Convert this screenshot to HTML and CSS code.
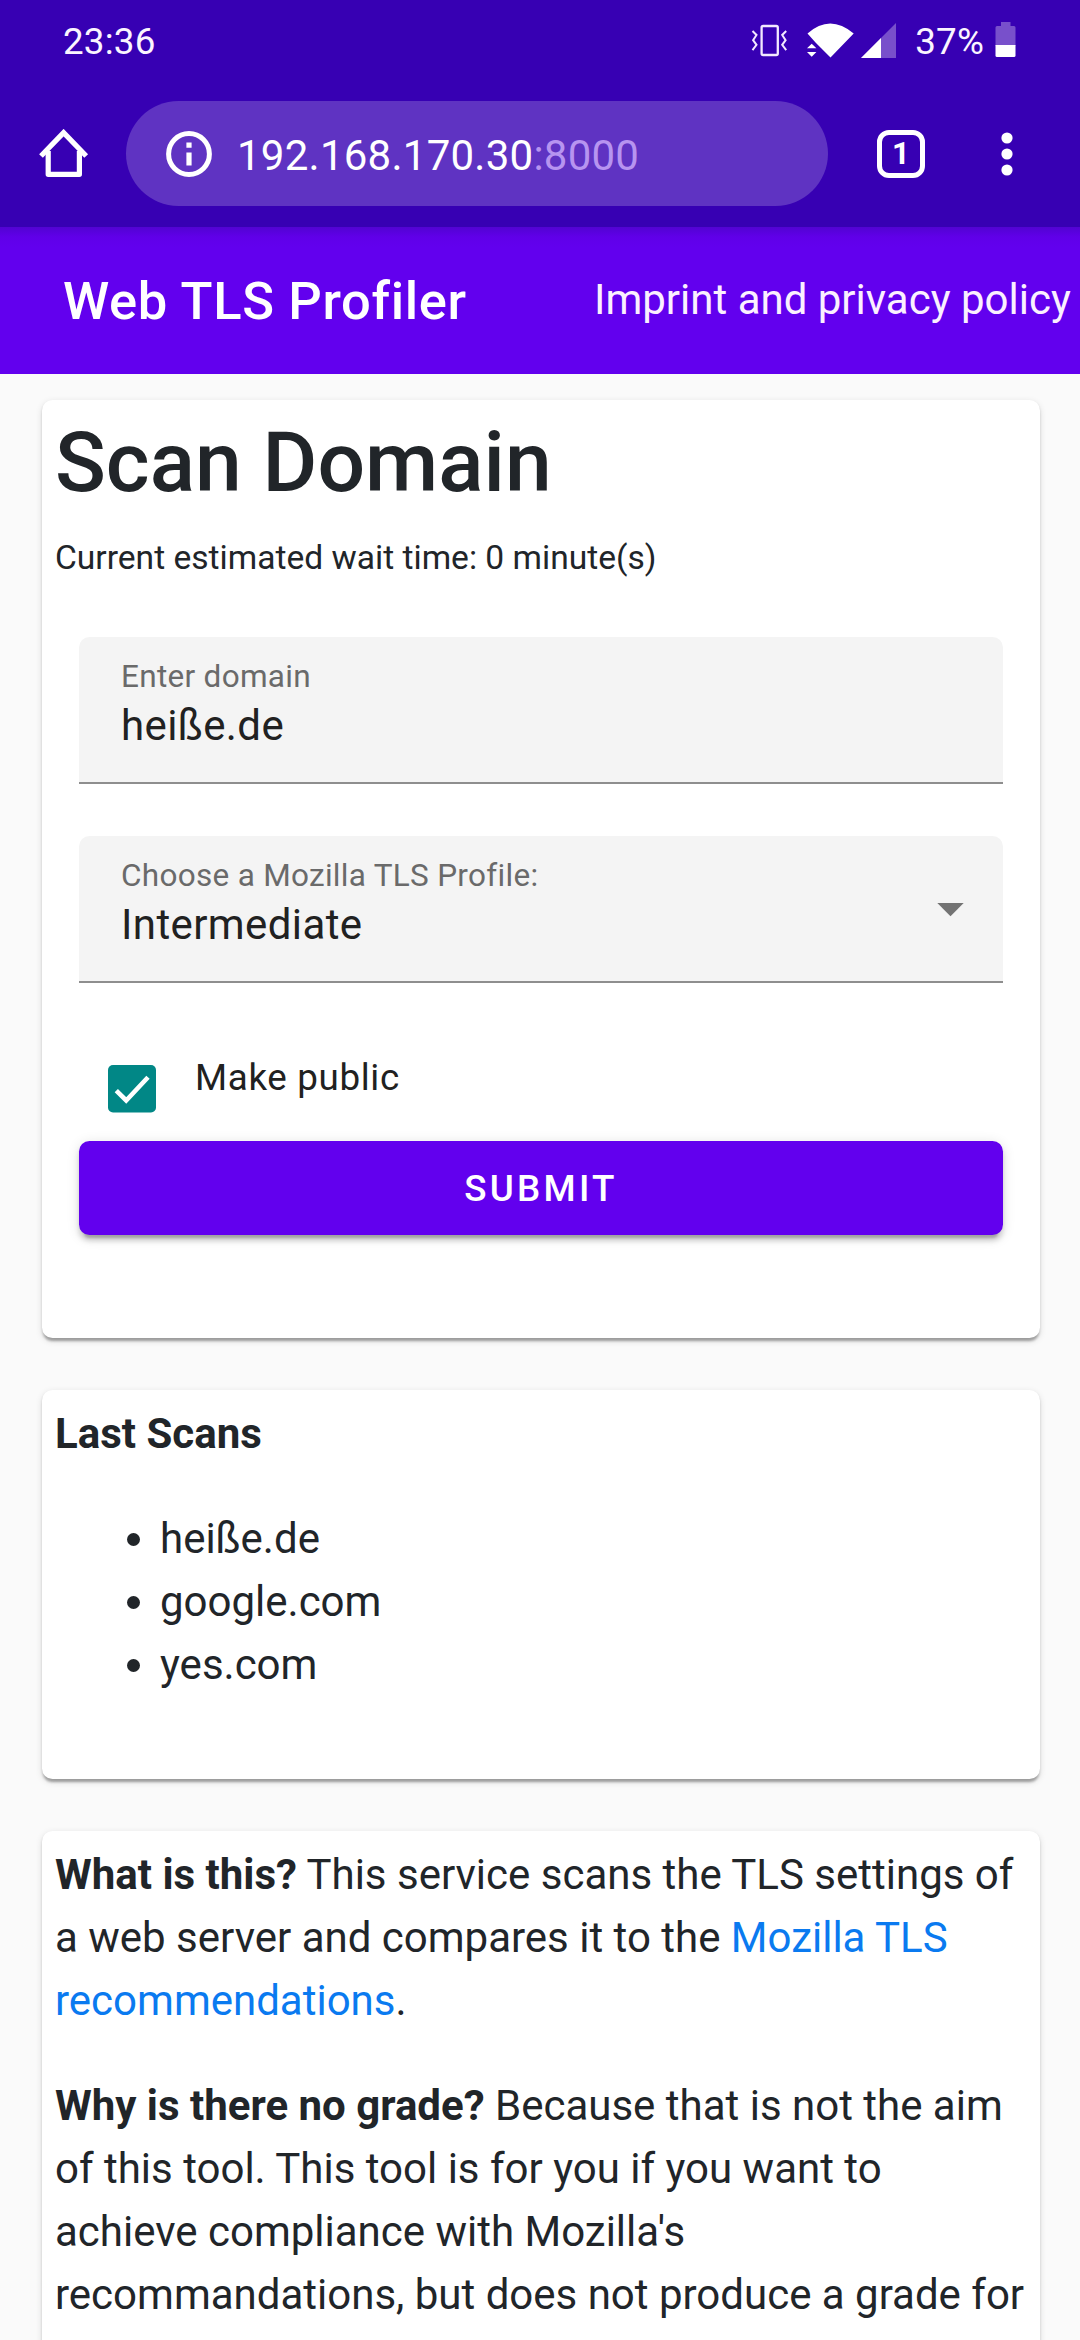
FILE: index.html
```html
<!DOCTYPE html>
<html lang="en">
<head>
<meta charset="utf-8">
<title>Web TLS Profiler</title>
<link rel="stylesheet" href="styles.css">
</head>
<body>
<div class="screen">
  <div class="chrome">
    <div class="status">
      <span class="status-text">23:36</span>
      <svg class="ic-vibrate" width="36" height="36" viewBox="750 22 36 36" fill="none" stroke="#f3e8ff" stroke-width="2"><rect x="760.6" y="26" width="16.2" height="29" rx="1.6" stroke-width="2.3"/><path d="M751.5 31l4 4-3.4 5.200 3.400 4.600-4 5.400M785.200 31l-4 4 3.400 5.200-3.400 4.600 4 5.400"/></svg>
      <svg class="ic-wifi" width="48" height="36" viewBox="805 22 48 36" fill="#fff"><path d="M806.500 33.500Q829 13.500 852.700 33.500L829.500 57.500 814.500 42.500zM806 48.200l4.700-4.400 4.700 4.400zM806 52h9.400l-4.700 4.800z"/></svg>
      <svg class="ic-signal" width="36" height="36" viewBox="860 22 36 36"><path d="M895 23v35h-35z" fill="#7850cb"/><path d="M880 38v20h-20z" fill="#fff"/></svg>
      <span class="status-text">37%</span>
      <svg class="ic-battery" width="21" height="36" viewBox="994.500 22 21 36"><path d="M1000.500 22h9.500v4h3.500q1.500 0 1.500 1.500V46h-20V27.500q0-1.500 1.500-1.500h4z" fill="#7850cb"/><path d="M995 45h20v10.500q0 1.500-1.500 1.500h-17q-1.500 0-1.500-1.500z" fill="#fff"/></svg>
    </div>
    <div class="toolbar">
      <svg class="ic-home" width="50" height="50" viewBox="39 129 50 50" fill="none" stroke="#fff" stroke-width="5.2" stroke-linejoin="round"><path d="M41 156l22.600-23.400L86.200 156" stroke-linejoin="miter"/><path d="M48.200 151v23.300h31.200V151"/></svg>
      <div class="url">
        <svg width="46" height="46" viewBox="0 0 46 46"><circle cx="23" cy="23" r="20.400" fill="none" stroke="#fff" stroke-width="5"/><path d="M20.400 11.500h5.200v5.200h-5.200zM20.400 21.500h5.200v13h-5.200z" fill="#fff"/></svg>
        <span class="url-text">192.168.170.30<span class="port">:8000</span></span>
      </div>
      <div class="tabs">1</div>
      <svg class="ic-menu" width="12" height="46" viewBox="0 0 12 46" fill="#fff"><circle cx="6" cy="7" r="5.600"/><circle cx="6" cy="23" r="5.600"/><circle cx="6" cy="39" r="5.600"/></svg>
    </div>
  </div>
  <header class="appbar">
    <span class="brand">Web TLS Profiler</span>
    <a class="imprint">Imprint and privacy policy</a>
  </header>
  <main class="page">
    <section class="card scan">
      <h1>Scan Domain</h1>
      <p class="wait">Current estimated wait time: 0 minute(s)</p>
      <form class="form">
        <div class="field"><div><div class="label">Enter domain</div><div class="value">heiße.de</div></div></div>
        <div class="field"><div><div class="label">Choose a Mozilla TLS Profile:</div><div class="value">Intermediate</div></div>
          <svg class="arrow" width="27" height="14" viewBox="0 0 27 14"><path d="M.3 0h26.400L13.500 13.300z" fill="#737373"/></svg></div>
        <div class="check">
          <svg width="48" height="48" viewBox="0 0 48 48"><rect width="48" height="47.500" rx="5" fill="#018786"/><path d="M8.300 25.600l9.900 9.900L40 12.300" fill="none" stroke="#fff" stroke-width="4.600"/></svg>
          <span class="check-label">Make public</span>
        </div>
        <button class="submit" type="button">SUBMIT</button>
      </form>
    </section>
    <section class="card scans">
      <b>Last Scans</b>
      <ul><li>heiße.de</li><li>google.com</li><li>yes.com</li></ul>
    </section>
    <section class="card about">
      <p><b>What is this?</b> This service scans the TLS settings of a web server and compares it to the <a class="link">Mozilla TLS recommendations</a>.</p>
      <p><b>Why is there no grade?</b> Because that is not the aim of this tool. This tool is for you if you want to achieve compliance with Mozilla's recommandations, but does not produce a grade for</p>
    </section>
  </main>
</div>
</body>
</html>
```
FILE: styles.css
```css
* { box-sizing: border-box; }
body { margin: 0; background: #fafafa; font-family: Roboto, sans-serif; font-size: 42px; line-height: 63px; color: #212529; }
svg { display: block; flex: none; }
h1, p, ul { margin: 0; }
.screen { width: 1080px; height: 2340px; overflow: hidden; display: flex; flex-direction: column; }

.chrome { flex: none; height: 227px; background: #3700b3; color: #fff; }
.status { height: 80px; padding: 0 64px 0 63px; display: flex; align-items: center; }
.status-text { font-size: 36.75px; line-height: 44px; padding-top: 3px; letter-spacing: .2px; color: #fbf5ff; }
.ic-vibrate { margin-left: auto; }
.ic-wifi { margin-left: 19px; }
.ic-signal { margin: 0 18px 0 7px; }
.ic-battery { margin-left: 11px; }
.toolbar { height: 147px; display: flex; align-items: center; padding: 0 67px 0 39px; }
.url { width: 702px; height: 105px; margin-left: 37px; padding-left: 40px; border-radius: 53px; background: #5f33c2; display: flex; align-items: center; gap: 25px; }
.url-text { padding-top: 3px; letter-spacing: .25px; }
.port { color: #b794f0; }
.tabs { width: 48px; height: 48px; margin-left: 49px; border: 5.250px solid #fff; border-radius: 12px; font-size: 31px; line-height: 37px; font-weight: 700; text-align: center; }
.ic-menu { margin-left: auto; }

.appbar { flex: none; height: 147px; padding-left: 63px; display: flex; align-items: center; background: linear-gradient(#5203d2, #6000e9 10px, #6200ee 20px); color: #fff; white-space: nowrap; }
.brand { width: 530px; font-size: 52.5px; font-weight: 500; line-height: 84px; letter-spacing: .0125em; }
.imprint { padding: 0 0 2px 1px; color: #fbf0ff; }

.page { padding: 26px 40px 0 42px; display: flex; flex-direction: column; gap: 52px; }
.card { flex: none; padding: 12px 13px; border-radius: 10.5px; background: #fff; box-shadow: 0 5.250px 2.625px -2.625px rgba(0,0,0,.2), 0 2.625px 2.625px rgba(0,0,0,.14), 0 2.625px 7.875px rgba(0,0,0,.12); }
.scan { height: 938px; padding-top: 13px; }
.scans { height: 389px; }
.about { height: 700px; display: flex; flex-direction: column; gap: 42px; }
h1 { font-size: 84px; font-weight: 500; line-height: 100px; }
.wait { margin-top: 19px; font-size: 33.6px; line-height: 51px; }
.form { padding: 54px 24px 0; display: flex; flex-direction: column; }
.field { height: 147px; margin-bottom: 52px; padding: 21px 39px 0 42px; display: flex; justify-content: space-between; background: #f4f4f4; border-bottom: 2.625px solid #8e8e8e; border-radius: 10.5px 10.5px 0 0; }
.label { font-size: 31.5px; line-height: 38px; color: #6a6a6a; letter-spacing: .0094em; }
.value { line-height: 50px; margin-top: 5px; color: #212121; letter-spacing: .0094em; }
.arrow { margin-top: 46px; }
.check { height: 106px; padding: 30px 0 0 29px; display: flex; gap: 39px; }
.check-label { font-size: 36.75px; line-height: 50px; margin-top: -12px; letter-spacing: .0179em; color: #212121; }
.submit { height: 94px; border: 0; border-radius: 10.5px; background: #6200ee; color: #fff; font: 500 36.75px/94px Roboto, sans-serif; letter-spacing: .0893em; padding: 1px 0 0; box-shadow: 0 7.875px 2.625px -5.250px rgba(0,0,0,.2), 0 5.250px 5.250px rgba(0,0,0,.14), 0 2.625px 13px rgba(0,0,0,.12); }
ul { margin-top: 42px; padding-left: 105px; }
.link { color: #0a7af0; }
```
